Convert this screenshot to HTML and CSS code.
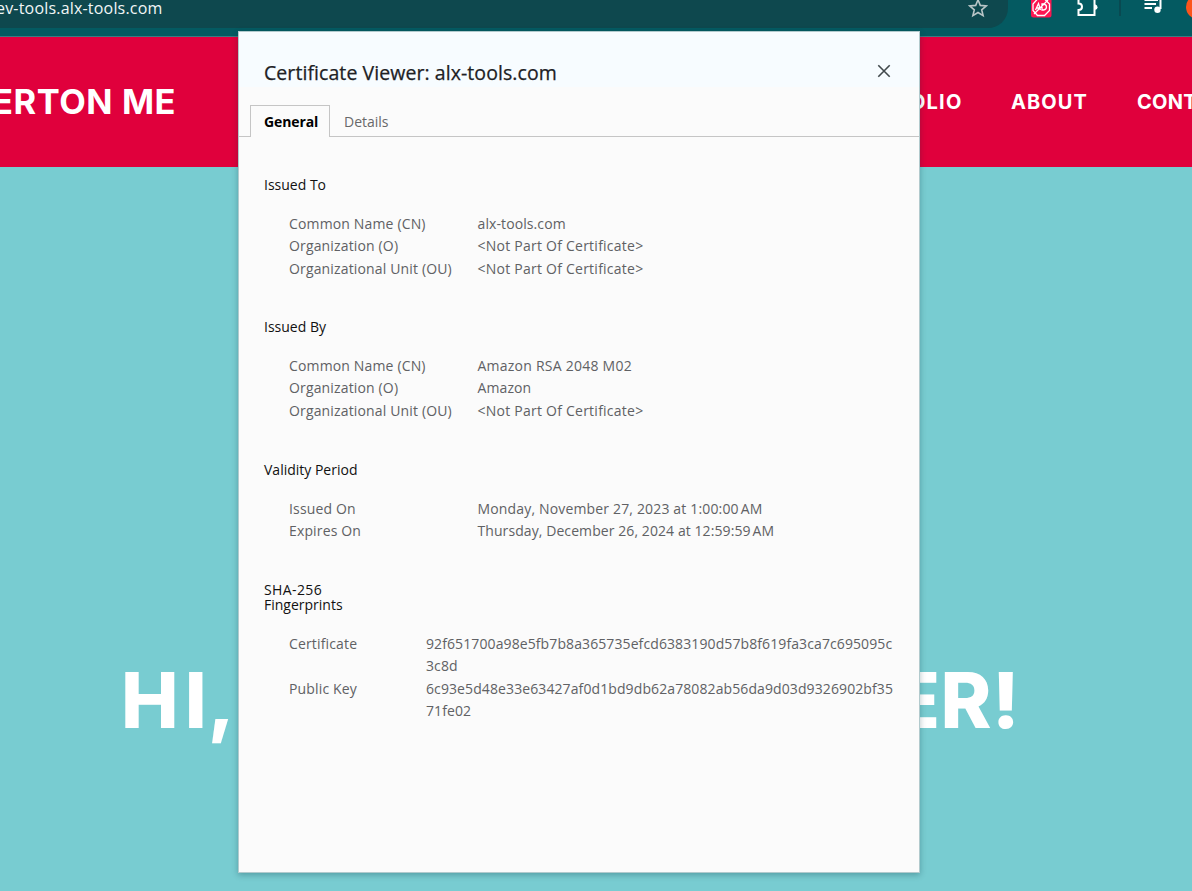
FILE: index.html
```
<!DOCTYPE html>
<html lang="en">
<head>
<meta charset="utf-8">
<title>Certificate Viewer: alx-tools.com</title>
<link rel="stylesheet" href="styles.css">
</head>
<body>
<header class="toolbar">
  <div class="omnibox">
    <span class="url">ev-tools.alx-tools.com</span>
    <svg class="star" width="20" height="20" viewBox="0 0 20 20"><path d="M10 1.800l2.300 5.600 6 .5-4.600 3.900 1.400 5.800-5.100-3.100-5.100 3.100 1.400-5.800L1.700 7.900l6-.5z" fill="none" stroke="#b9c5c7" stroke-width="1.600"/></svg>
  </div>
  <svg class="extensions" width="176" height="36" viewBox="0 0 176 36">
    <rect x="15" y="-4" width="20.500" height="21.500" rx="2.500" fill="#fb1551"/>
    <path d="M21.500-1h7l5 5v6.500l-5 5h-7l-4.500-5V4z" fill="none" stroke="#fff" stroke-width="1.300"/>
    <path d="M18 14L32 0M19.500 10l3-6.500 2 6.500M20.500 8h3.500M26 4v6h1.500q3-.5 3-3t-3-3z" fill="none" stroke="#fff" stroke-width="1.300"/>
    <path d="M62.500-3V3.500q3.500 0 3.500 3.300t-3.500 3.300V15h16V-3" fill="none" stroke="#fff" stroke-width="2"/>
    <path d="M78.500 4.500h1q2 .5 2 2.700t-2 2.500h-1z" fill="#fff"/>
    <path d="M104 0v16" stroke="#0b454c" stroke-width="1.500"/>
    <path d="M128.500 0H142M128.500 4H140M128.500 8H136M144.500 9V-1h5" fill="none" stroke="#fff" stroke-width="2"/>
    <circle cx="141.500" cy="9.800" r="3.200" fill="#fff"/>
    <circle cx="182" cy="7" r="12" fill="#fc541c"/>
  </svg>
</header>
<nav class="site-nav">
  <span class="brand">ERTON ME</span>
  <div class="links"><span class="l1">OLIO</span><span class="l2">ABOUT</span><span class="l3">CONT</span></div>
</nav>
<main class="hero"><span class="hi">H<span class="i">I</span>,</span><span class="er">ER!</span></main>

<section class="dialog">
  <div class="dialog-head">
    <h1>Certificate Viewer: alx-tools.com</h1>
    <svg width="14" height="14" viewBox="0 0 14 14"><path d="M1.300 1.300l11.400 11.400M12.700 1.300L1.300 12.700" stroke="#41494c" stroke-width="1.600"/></svg>
  </div>
  <div class="tabs"><span class="tab active"><b>General</b></span><span class="tab details">Details</span></div>
  <div class="panel">
    <h2>Issued To</h2>
    <dl>
      <dt>Common Name (CN)</dt><dd>alx-tools.com</dd>
      <dt>Organization (O)</dt><dd class="np">&lt;Not Part Of Certificate&gt;</dd>
      <dt>Organizational Unit (OU)</dt><dd class="np">&lt;Not Part Of Certificate&gt;</dd>
    </dl>
    <h2>Issued By</h2>
    <dl class="issuer">
      <dt>Common Name (CN)</dt><dd class="rsa">Amazon RSA 2048 M02</dd>
      <dt>Organization (O)</dt><dd>Amazon</dd>
      <dt>Organizational Unit (OU)</dt><dd class="np">&lt;Not Part Of Certificate&gt;</dd>
    </dl>
    <h2>Validity Period</h2>
    <dl class="validity">
      <dt>Issued On</dt><dd class="date">Monday, November 27, 2023 at 1:00:00&#8239;AM</dd>
      <dt>Expires On</dt><dd class="expires">Thursday, December 26, 2024 at 12:59:59&#8239;AM</dd>
    </dl>
    <h2 class="sha"><span class="wide">SHA-256</span><br>Fingerprints</h2>
    <dl class="prints">
      <dt>Certificate</dt><dd>92f651700a98e5fb7b8a365735efcd6383190d57b8f619fa3ca7c695095c<br>3c8d</dd>
      <dt>Public Key</dt><dd>6c93e5d48e33e63427af0d1bd9db62a78082ab56da9d03d9326902bf35<br>71fe02</dd>
    </dl>
  </div>
</section>
</body>
</html>
```
FILE: styles.css
```
* { box-sizing: border-box; }
body { margin: 0; width: 1192px; height: 891px; overflow: hidden; position: relative; display: flex; flex-direction: column; background: #78ccd1; font-family: "Open Sans", "Noto Sans", sans-serif; white-space: nowrap; }
.toolbar { height: 37px; flex: none; display: flex; background: #045a61; border-bottom: 1px solid #3b7b82; }
.omnibox { width: 1008px; height: 28px; flex: none; background: #0e484e; border-bottom-right-radius: 20px; display: flex; justify-content: space-between; padding-right: 20px; }
.url { color: #f1f6f6; font-size: 16px; line-height: 18px; margin: -1px 0 0 -4px; letter-spacing: 0.19px; }
.star { margin-top: -2px; }
.extensions { margin-left: 8px; }
.site-nav { height: 130px; flex: none; background: #e0003c; display: flex; justify-content: space-between; align-items: center; color: #fff; font-family: Inter, sans-serif; font-weight: 700; }
.brand { font-size: 34.500px; margin: -1px 0 0 -8px; letter-spacing: 0.55px; }
.links { width: 289px; height: 30px; line-height: 30px; font-size: 20px; display: grid; grid-template-columns: 108px 126px 55px; }
.l1 { letter-spacing: 1.2px; padding-left: 7px; }
.l2 { letter-spacing: 1.1px; }
.l3 { letter-spacing: 0.3px; }
.hero { height: 724px; flex: none; display: flex; justify-content: space-between; padding: 485px 172px 0 121px; color: #fff; font: 800 77px/96px Inter, sans-serif; }
.hi { letter-spacing: 6px; }
.i { letter-spacing: 1px; }
.er { letter-spacing: 0.5px; }

.dialog { position: absolute; left: 238px; top: 31px; width: 682px; height: 842px; border: 1px solid #b2cacd; background: #fbfbfb; box-shadow: 0 2px 6px rgba(0,50,60,.3); }
.dialog-head { height: 55px; background: #f7fcff; display: flex; justify-content: space-between; padding: 32px 28px 0 25px; }
.dialog-head h1 { margin: -5px 0 0; color: #202124; font-size: 19.500px; font-weight: 500; line-height: 28px; letter-spacing: 0.07px; -webkit-text-stroke: 0.25px #202124; }
.tabs { height: 50px; display: flex; padding: 18px 0 0 11px; font-size: 14px; line-height: 32px; box-shadow: inset 0 -1px #c5c5c5; color: #68686a; }
.tab { padding-left: 14px; }
.details { padding-top: 1px; }
.active { width: 80px; padding-left: 13px; color: #000; border: 1px solid #c5c5c5; border-bottom: 0; background: #fbfbfb; letter-spacing: -0.1px; }
.panel { padding: 37px 25px 0; font-size: 14px; }
h2 { margin: 0; height: 22px; font-size: 14px; font-weight: 400; line-height: 22px; color: #111; }
dl { display: grid; grid-template-columns: 188.500px 1fr; grid-auto-rows: 22.400px; margin: 17px 0 35.800px 25px; line-height: 22.400px; color: #606164; }
dd, dt { margin: 0; letter-spacing: 0.1px; }
dt { letter-spacing: 0.15px; }
.np, .rsa { letter-spacing: 0.24px; }
.date { letter-spacing: 0.16px; }
.expires { letter-spacing: 0.08px; }
.issuer { margin-bottom: 36.800px; }
.validity { margin-bottom: 39.500px; }
h2.sha { height: 30px; line-height: 15px; }
.wide { letter-spacing: 0.4px; }
.prints { grid-template-columns: 137px 1fr; grid-auto-rows: 45px; margin-top: 20.500px; }
```
